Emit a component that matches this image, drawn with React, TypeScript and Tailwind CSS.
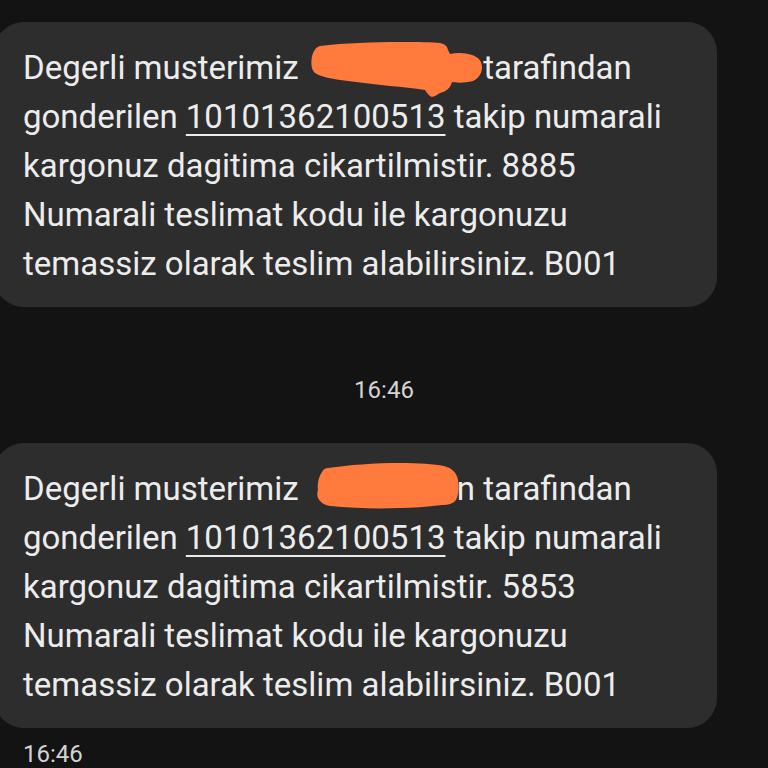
import React from "react";

function Blob1() {
  return (
    <svg className="absolute left-[310px] top-[16px]" width="182" height="64" viewBox="0 0 182 64">
      <path
        d="M8 18 C10 12 12 9 16 8 C40 5 70 4 96 4 C115 4 128 4 136 5 C141 6 143 8 144 12 L146 16 C154 14 162 15 168 17 C174 19 178 23 178 29 C178 35 175 40 169 43 C161 45 153 45 148 44 C147 47 146 49 144 51 C142 53 139 54 136 55 C133 57 131 58 128 59 C125 58 123 55 121 52 C110 50 98 49 86 48 C68 46 52 44 36 42 C24 40 14 38 10 34 C7 30 7 24 8 18 Z"
        fill="#ff7a3c"
      />
    </svg>
  );
}

function Blob2() {
  return (
    <svg className="absolute left-[310px] top-[15px]" width="182" height="64" viewBox="0 0 182 64">
      <path
        d="M14 32 C13 26 15 18 18 14 C20 11 21 10 24 10 C45 7 70 5 96 5 C115 5 130 6 140 8 C148 10 153 15 154 22 C155 29 155 36 152 42 C149 46 144 47 138 47 C122 49 108 50 96 50 C72 51 48 50 26 48 C20 47 16 44 14 40 C13 37 13 35 14 32 Z"
        fill="#ff7a3c"
      />
    </svg>
  );
}

function Bubble({ code, first }: { code: string; first: boolean }) {
  return (
    <div className="relative ml-[-6px] w-[723px] rounded-[30px] bg-[#2d2d2d] pl-[29px] pr-4 pt-[21px] pb-[19px]">
      <div className="text-[33px] leading-[49px] text-[#ececec] whitespace-nowrap" style={{ fontFamily: "Roboto, 'Noto Sans', sans-serif" }}>
        <div>
          Degerli musterimiz <span className="inline-block w-[142px]"></span>in tarafindan
        </div>
        <div>
          gonderilen <span className="underline decoration-[2px] underline-offset-[6px]">10101362100513</span> takip numarali
        </div>
        <div>kargonuz dagitima cikartilmistir. {code}</div>
        <div>Numarali teslimat kodu ile kargonuzu</div>
        <div>temassiz olarak teslim alabilirsiniz. B001</div>
      </div>
      {first ? <Blob1 /> : <Blob2 />}
    </div>
  );
}

export default function App() {
  return (
    <div className="w-[768px] h-[768px] overflow-hidden bg-[#131313] pt-[22px]" style={{ fontFamily: "Roboto, 'Noto Sans', sans-serif" }}>
      <Bubble code="8885" first={true} />
      <div className="h-[136px] flex items-center justify-center pt-[30px] text-[24px] text-[#d4d4d4]">16:46</div>
      <Bubble code="5853" first={false} />
      <div className="pl-[23px] pt-[10px] text-[24px] leading-[32px] text-[#d4d4d4]">16:46</div>
    </div>
  );
}
